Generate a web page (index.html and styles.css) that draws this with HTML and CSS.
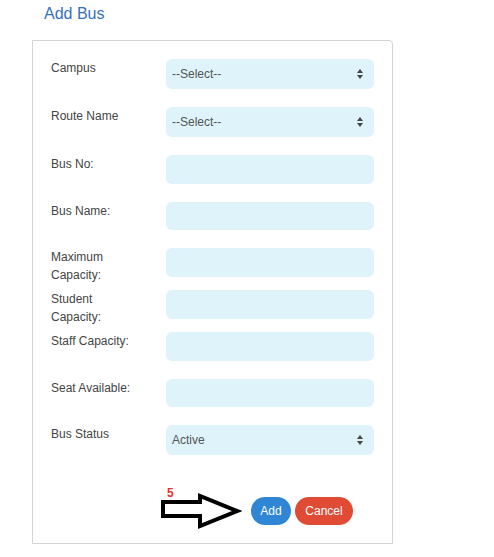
FILE: index.html
```html
<!DOCTYPE html>
<html lang="en">
<head>
<meta charset="utf-8">
<title>Add Bus</title>
<link rel="stylesheet" href="styles.css">
</head>
<body>
<h1 class="title">Add Bus</h1>
<div class="panel">
  <div class="row">
    <label class="label">Campus</label>
    <div class="select"><span>--Select--</span>
      <svg class="caret" width="6" height="10" viewBox="0 0 6 10"><path d="M3 0 L6 4 L0 4 Z M0 6 L6 6 L3 10 Z" fill="#444"/></svg>
    </div>
  </div>
  <div class="row">
    <label class="label">Route Name</label>
    <div class="select"><span>--Select--</span>
      <svg class="caret" width="6" height="10" viewBox="0 0 6 10"><path d="M3 0 L6 4 L0 4 Z M0 6 L6 6 L3 10 Z" fill="#444"/></svg>
    </div>
  </div>
  <div class="row">
    <label class="label">Bus No:</label>
    <div class="input"></div>
  </div>
  <div class="row">
    <label class="label">Bus Name:</label>
    <div class="input"></div>
  </div>
  <div class="row row-tall">
    <label class="label">Maximum<br>Capacity:</label>
    <div class="input"></div>
  </div>
  <div class="row row-tall">
    <label class="label">Student<br>Capacity:</label>
    <div class="input"></div>
  </div>
  <div class="row">
    <label class="label">Staff Capacity:</label>
    <div class="input"></div>
  </div>
  <div class="row">
    <label class="label">Seat Available:</label>
    <div class="input"></div>
  </div>
  <div class="row row-last">
    <label class="label">Bus Status</label>
    <div class="select"><span>Active</span>
      <svg class="caret" width="6" height="10" viewBox="0 0 6 10"><path d="M3 0 L6 4 L0 4 Z M0 6 L6 6 L3 10 Z" fill="#444"/></svg>
    </div>
  </div>
  <div class="actions">
    <div class="annotation">
      <span class="step">5</span>
      <svg width="84" height="36" viewBox="0 0 84 36"><polygon points="5,9 42,9 42,3 79,18 42,33 42,23 5,23" fill="#fff" stroke="#000" stroke-width="4" stroke-linejoin="miter"/></svg>
    </div>
    <button class="btn btn-add">Add</button>
    <button class="btn btn-cancel">Cancel</button>
  </div>
</div>
</body>
</html>
```
FILE: styles.css
```css
* { box-sizing: border-box; }
html, body {
  margin: 0;
  padding: 0;
  background: #fff;
  font-family: "Liberation Sans", Arial, sans-serif;
}
.title {
  margin: 0;
  padding: 5px 0 0 44px;
  font-size: 16px;
  line-height: 18px;
  font-weight: normal;
  color: #3570bd;
}
.panel {
  margin: 17px 0 0 32px;
  width: 361px;
  border: 1px solid #d3d3d3;
  border-radius: 0 4px 0 0;
  padding: 18px 18px 14px 18px;
}
.row {
  display: flex;
  align-items: flex-start;
  margin-bottom: 18px;
}
.row-tall { margin-bottom: 6px; }
.row-last { margin-bottom: 0; }
.label {
  width: 115px;
  flex: none;
  font-size: 12px;
  line-height: 18px;
  color: #444;
}
.input, .select {
  flex: 1;
  background: #dff3fb;
  border-radius: 6px;
}
.input { height: 28.5px; }
.select {
  height: 30px;
  display: flex;
  align-items: center;
  justify-content: space-between;
  padding: 0 11px 0 6px;
  font-size: 12px;
  color: #555;
}
.caret { display: block; }
.actions {
  display: flex;
  align-items: center;
  margin-top: 38px;
  margin-left: 107px;
  gap: 4px;
}
.annotation {
  position: relative;
  width: 84px;
  height: 36px;
  margin-right: 5px;
}
.annotation svg { display: block; }
.step {
  position: absolute;
  left: 9px;
  top: -7px;
  font-size: 12px;
  line-height: 14px;
  font-weight: bold;
  color: #f03030;
}
.btn {
  height: 28px;
  border: none;
  border-radius: 14px;
  font-family: "Liberation Sans", Arial, sans-serif;
  font-size: 12px;
  color: #fff;
  cursor: pointer;
}
.btn-add { background: #2e86d4; width: 40px; padding: 0; }
.btn-cancel { background: #e04b35; width: 58px; padding: 0; }
```
